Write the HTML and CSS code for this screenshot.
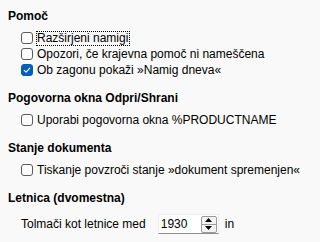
FILE: index.html
```html
<!DOCTYPE html>
<html lang="sl">
<head>
<meta charset="utf-8">
<link rel="stylesheet" href="styles.css">
</head>
<body>
<div class="page">
  <section class="group">
    <h2 class="group-title">Pomoč</h2>
    <div class="rows">
      <label class="check-row"><span class="box"></span><span class="label focus">Razširjeni namigi</span></label>
      <label class="check-row"><span class="box"></span><span class="label">Opozori, če krajevna pomoč ni nameščena</span></label>
      <label class="check-row"><span class="box checked"><svg viewBox="0 0 12 12" width="12" height="12"><path d="M3.2 6.3 L5.1 8.1 L8.8 4.1" fill="none" stroke="#fff" stroke-width="1.1" stroke-linecap="round" stroke-linejoin="round"/></svg></span><span class="label">Ob zagonu pokaži »Namig dneva«</span></label>
    </div>
  </section>
  <section class="group">
    <h2 class="group-title">Pogovorna okna Odpri/Shrani</h2>
    <div class="rows">
      <label class="check-row"><span class="box"></span><span class="label">Uporabi pogovorna okna %PRODUCTNAME</span></label>
    </div>
  </section>
  <section class="group">
    <h2 class="group-title">Stanje dokumenta</h2>
    <div class="rows">
      <label class="check-row"><span class="box"></span><span class="label">Tiskanje povzroči stanje »dokument spremenjen«</span></label>
    </div>
  </section>
  <section class="group">
    <h2 class="group-title">Letnica (dvomestna)</h2>
    <div class="rows">
      <div class="spin-row">
        <span class="label">Tolmači kot letnice med</span>
        <span class="spin">
          <span class="spin-value">1930</span>
          <span class="spin-buttons">
            <span class="spin-btn up"><svg viewBox="0 0 7 4" width="7" height="4"><path d="M0 4 L3.5 0 L7 4 Z" fill="#000"/></svg></span>
            <span class="spin-btn down"><svg viewBox="0 0 7 4" width="7" height="4"><path d="M0 0 L3.5 4 L7 0 Z" fill="#000"/></svg></span>
          </span>
        </span>
        <span class="label">in</span>
      </div>
    </div>
  </section>
</div>
</body>
</html>
```

FILE: styles.css
```css
html, body {
  margin: 0;
  padding: 0;
}
body {
  background: #f9f9f9;
  color: #000;
  font-family: "Liberation Sans", Arial, sans-serif;
  font-size: 12px;
  line-height: 16px;
}
.page {
  padding: 8px 8px 0 8px;
}
.group + .group {
  margin-top: 12px;
}
.group-title {
  margin: 0 0 6px 0;
  font-size: 12px;
  font-weight: bold;
  line-height: 16px;
}
.rows {
  padding-left: 13px;
}
.check-row {
  display: flex;
  align-items: center;
  height: 16px;
  gap: 4px;
}
.box {
  box-sizing: border-box;
  width: 12px;
  height: 12px;
  border: 1px solid #5b5b5b;
  border-radius: 3px;
  background: #fdfdfd;
  flex: none;
  position: relative;
}
.box.checked {
  background: #005fb8;
  border-color: #005fb8;
}
.box.checked svg {
  position: absolute;
  left: -1px;
  top: -1px;
}
.label {
  white-space: nowrap;
}
.focus {
  margin-left: -1px;
  padding: 0 1px 0 0;
  line-height: 13px;
  border: 1px dotted #000;
}
.spin-row {
  display: flex;
  align-items: center;
  height: 20px;
  margin-top: 8px;
}
.spin {
  box-sizing: border-box;
  display: flex;
  align-items: center;
  justify-content: space-between;
  width: 61px;
  height: 20px;
  margin: 0 6px 0 12px;
  padding: 0 1px 0 2px;
  background: #fff;
  border: 1px solid #ececec;
  border-bottom-color: #8d8d8d;
}
.spin-buttons {
  display: flex;
  flex-direction: column;
  width: 16px;
  height: 17px;
  box-sizing: border-box;
  border: 1px solid #9a9a9a;
  border-radius: 2px;
  background: #f3f3f3;
}
.spin-btn {
  flex: 1;
  display: flex;
  align-items: center;
  justify-content: center;
}
.spin-btn.up {
  border-bottom: 1px solid #9a9a9a;
}
```
